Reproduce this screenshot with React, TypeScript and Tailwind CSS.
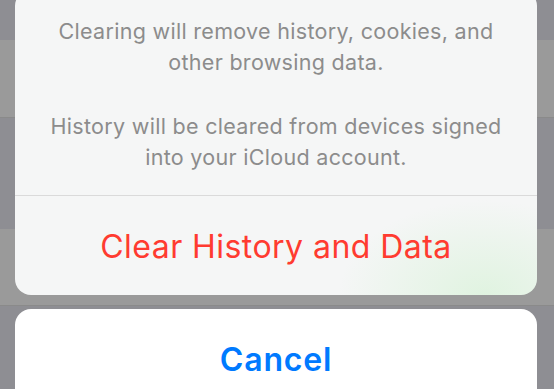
import React from "react";

export default function App() {
  return (
    <div className="relative w-[554px] h-[389px] overflow-hidden bg-[#8e8e93]" style={{ fontFamily: "Inter, 'Noto Sans', sans-serif" }}>
      {/* dimmed background rows */}
      <div className="flex flex-col">
        <div className="h-[40px] bg-[#8e8e93]" />
        <div className="h-[78px] bg-[#9a9a9a] border-b border-[#8a8a8a]" />
        <div className="h-[111px] bg-[#8e8e93]" />
        <div className="h-[77px] bg-[#9a9a9a] border-b border-[#8a8a8a]" />
        <div className="h-[83px] bg-[#8e8e93]" />
      </div>

      {/* action sheet */}
      <div className="absolute left-[15px] right-[17px] top-[-10px] flex flex-col gap-[14px]">
        <div className="rounded-[16px] overflow-hidden bg-[#f5f6f6] bg-[radial-gradient(ellipse_at_90%_100%,rgba(215,242,215,0.7),rgba(240,245,242,0)_22%)]">
          <div className="pt-[26px] pb-[22px] px-2 text-center text-[21.5px] leading-[31px] text-[#8c8c8c] tracking-[0.3px]">
            <p>
              Clearing will remove history, cookies, and
              <br />
              other browsing data.
            </p>
            <p className="mt-[33px]">
              History will be cleared from devices signed
              <br />
              into your iCloud account.
            </p>
          </div>
          <div className="h-px bg-[#dadada]" />
          <div className="h-[99px] flex items-center justify-center pt-[3px] text-[32px] text-[#ff3b30] tracking-[0.45px]">
            Clear History and Data
          </div>
        </div>
        <div className="rounded-[16px] bg-white h-[110px] flex items-start justify-center pt-[32px]">
          <span className="text-[32px] font-semibold text-[#007aff] leading-[38px] tracking-[0.8px]">Cancel</span>
        </div>
      </div>
    </div>
  );
}
